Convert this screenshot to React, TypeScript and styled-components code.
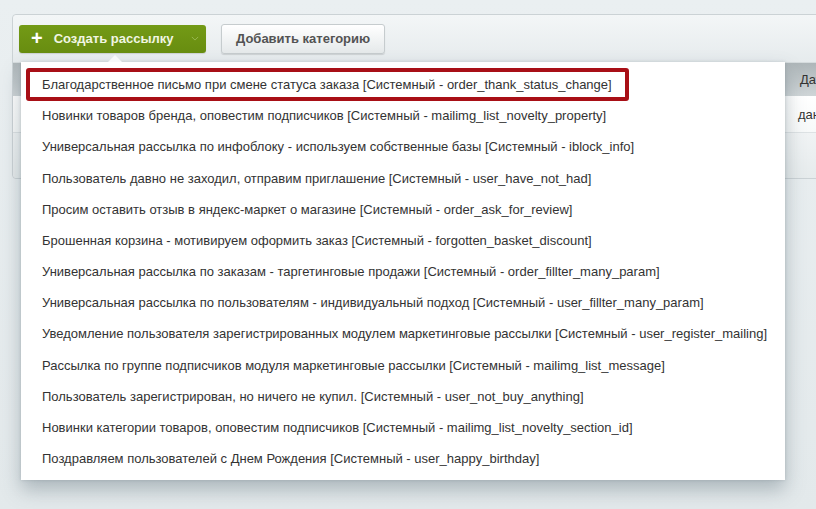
import styled, { createGlobalStyle } from "styled-components";

const GlobalStyle = createGlobalStyle`
  html, body {
    margin: 0;
    padding: 0;
    overflow: hidden;
  }
  body {
    background: linear-gradient(#eaeff1, #e3e9eb);
    font-family: "Liberation Sans", Arial, sans-serif;
  }
`;

const templates = [
  "Благодарственное письмо при смене статуса заказа [Системный - order_thank_status_change]",
  "Новинки товаров бренда, оповестим подписчиков [Системный - mailimg_list_novelty_property]",
  "Универсальная рассылка по инфоблоку - используем собственные базы [Системный - iblock_info]",
  "Пользователь давно не заходил, отправим приглашение [Системный - user_have_not_had]",
  "Просим оставить отзыв в яндекс-маркет о магазине [Системный - order_ask_for_review]",
  "Брошенная корзина - мотивируем оформить заказ [Системный - forgotten_basket_discount]",
  "Универсальная рассылка по заказам - таргетинговые продажи [Системный - order_fillter_many_param]",
  "Универсальная рассылка по пользователям - индивидуальный подход [Системный - user_fillter_many_param]",
  "Уведомление пользователя зарегистрированных модулем маркетинговые рассылки [Системный - user_register_mailing]",
  "Рассылка по группе подписчиков модуля маркетинговые рассылки [Системный - mailimg_list_message]",
  "Пользователь зарегистрирован, но ничего не купил. [Системный - user_not_buy_anything]",
  "Новинки категории товаров, оповестим подписчиков [Системный - mailimg_list_novelty_section_id]",
  "Поздравляем пользователей с Днем Рождения [Системный - user_happy_birthday]",
];

const App = () => {
  return (
    <>
      <GlobalStyle />
      <Page>
        <Panel>
          <Toolbar>
            <AcceptButton>
              <Plus>+</Plus>
              <span>Создать рассылку</span>
              <Chevron viewBox="0 0 10 6">
                <path d="M1 1 L5 5 L9 1" />
              </Chevron>
            </AcceptButton>
            <PlainButton>Добавить категорию</PlainButton>
          </Toolbar>
          <HeaderRow>
            <Spacer />
            <HeadCell>Дата изменения</HeadCell>
          </HeaderRow>
          <BodyRow>
            <Spacer />
            <Cell>данные отсутствуют</Cell>
          </BodyRow>
          <Footer />

          <Menu>
            {templates.map((title, i) => (
              <MenuItem key={title} $active={i === 0}>
                {title}
              </MenuItem>
            ))}
          </Menu>
        </Panel>
      </Page>
    </>
  );
};

export default App;

const Page = styled.div`
  padding: 14px 0 0 12px;
  height: 495px;
`;

const Panel = styled.div`
  position: relative;
  width: 880px;
  border: 1px solid #cbd2d5;
  border-radius: 4px;
  background: #eef2f3;
`;

const Toolbar = styled.div`
  display: flex;
  align-items: center;
  gap: 15px;
  height: 47px;
  padding: 0 0 0 6px;
  background: linear-gradient(#f3f6f7, #e6ebed);
  border-radius: 4px 4px 0 0;
`;

const AcceptButton = styled.button`
  display: flex;
  align-items: center;
  height: 28px;
  width: 187px;
  padding: 0 0 0 12px;
  border: none;
  border-radius: 3px;
  background: linear-gradient(#739a16, #688d10);
  color: #f1f6e2;
  font-family: "Liberation Sans", Arial, sans-serif;
  font-size: 13px;
  font-weight: bold;
  box-shadow: 0 1px 1px rgba(0, 0, 0, 0.12);
`;

const Plus = styled.span`
  font-size: 20px;
  line-height: 1;
  color: #ffffff;
  margin: -2px 11px 0 0;
`;

const Chevron = styled.svg`
  width: 8px;
  height: 5px;
  margin-left: 17px;
  fill: none;
  stroke: #a3c060;
  stroke-width: 1;
`;

const PlainButton = styled.button`
  height: 30px;
  padding: 0 14px;
  border: 1px solid #c6ccce;
  border-radius: 3px;
  background: linear-gradient(#ffffff, #e5e9ea);
  color: #535353;
  font-family: "Liberation Sans", Arial, sans-serif;
  font-size: 13px;
  font-weight: bold;
  box-shadow: 0 1px 1px rgba(0, 0, 0, 0.12);
`;

const HeaderRow = styled.div`
  display: flex;
  height: 33px;
  align-items: center;
  background: linear-gradient(#aeb6b9, #cfd5d7);
  border-top: 1px solid #d6dcde;
`;

const Spacer = styled.div`
  width: 778px;
  flex: none;
`;

const HeadCell = styled.div`
  padding-left: 9px;
  font-size: 13px;
  color: #333;
  white-space: nowrap;
`;

const BodyRow = styled.div`
  display: flex;
  height: 36px;
  align-items: center;
  background: linear-gradient(#ffffff, #f7f9f9);
  border-bottom: 1px solid #dde2e4;
`;

const Cell = styled.div`
  padding-left: 7px;
  font-size: 13px;
  color: #333;
  white-space: nowrap;
`;

const Footer = styled.div`
  height: 45px;
  background: linear-gradient(#f0f3f4, #e6ebec);
  border-radius: 0 0 4px 4px;
`;

const Menu = styled.div`
  position: absolute;
  left: 8px;
  top: 47px;
  width: 764px;
  height: 418px;
  box-sizing: border-box;
  padding: 7px 0 0 5px;
  display: flex;
  flex-direction: column;
  align-items: flex-start;
  background: #ffffff;
  box-shadow: 0 10px 18px rgba(70, 90, 100, 0.35), 0 0 3px rgba(70, 90, 100, 0.2);
  z-index: 10;

  &::before {
    content: "";
    position: absolute;
    left: 87px;
    top: -7px;
    border-left: 7px solid transparent;
    border-right: 7px solid transparent;
    border-bottom: 7px solid #f7f9fa;
  }
`;

const MenuItem = styled.div<{ $active: boolean }>`
  box-sizing: border-box;
  height: ${(p) => (p.$active ? "33px" : "31.17px")};
  margin: ${(p) => (p.$active ? "-1px 0 -0.83px" : "0")};
  display: flex;
  align-items: center;
  padding: 0 13px 0 12px;
  border: 4px solid ${(p) => (p.$active ? "#a80f16" : "transparent")};
  border-radius: 3px;
  font-size: 13px;
  color: #333;
  white-space: nowrap;
`;
